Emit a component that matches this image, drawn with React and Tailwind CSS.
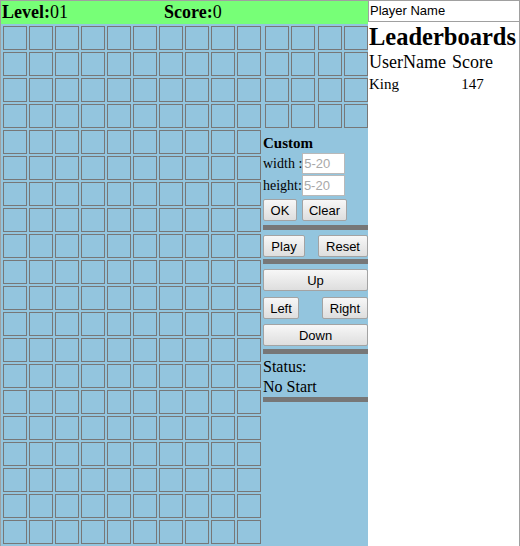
import React from 'react';

const cellCls = 'w-6 h-6 border border-[#777777]';

const Cells = ({ count }) =>
  Array.from({ length: count }).map((_, i) => <div key={i} className={cellCls} />);

const Btn = ({ className = '', children }) => (
  <button
    className={`h-[22px] border border-[#a3a3a3] rounded-[2px] bg-gradient-to-b from-[#f7f7f7] to-[#dedede] text-[13px] text-black leading-none font-['Liberation_Sans',Arial,sans-serif] ${className}`}
  >
    {children}
  </button>
);

const Sep = ({ className = '' }) => <div className={`h-[5px] bg-[#777777] ${className}`} />;

const SizeInput = () => (
  <input
    placeholder="5-20"
    className="w-[43px] h-[21px] border border-[#b9b9b9] bg-white pl-[1px] text-[13px] font-['Liberation_Sans',Arial,sans-serif] placeholder:text-[#a8a8a8] outline-none"
  />
);

export default function App() {
  return (
    <div className="w-[520px] h-[546px] flex bg-white border-l border-t border-r border-[#a0a0a0] font-['Liberation_Serif','Times_New_Roman',serif] text-black overflow-hidden">
      <div className="w-[367px] flex flex-col">
        <div className="h-[23px] bg-[#77ff77] flex text-[18px] leading-[23px] pl-[1px]">
          <div className="w-[162px]">
            <b>Level:</b>01
          </div>
          <div>
            <b>Score:</b>0
          </div>
        </div>
        <div className="flex flex-1 bg-[#93c5de]">
          <div className="grid grid-cols-10 gap-[2px] p-[2px] self-start">
            <Cells count={200} />
          </div>
          <div className="w-[105px] flex flex-col">
            <div className="grid grid-cols-4 gap-[2px] pt-[2px] pb-[2px] pl-[2px]">
              <Cells count={16} />
            </div>
            <div className="mt-[4px] text-[15px] leading-[18px] font-bold">Custom</div>
            <div className="mt-[1px] h-[21px] flex items-center text-[14px]">
              <span>width :</span>
              <SizeInput />
            </div>
            <div className="mt-[1px] h-[21px] flex items-center text-[14px]">
              <span>height:</span>
              <SizeInput />
            </div>
            <div className="mt-[3px] flex gap-[5px]">
              <Btn className="w-[34px] h-[21px]">OK</Btn>
              <Btn className="w-[45px] h-[21px]">Clear</Btn>
            </div>
            <Sep className="mt-[4px]" />
            <div className="mt-[5px] flex justify-between">
              <Btn className="w-[42px]">Play</Btn>
              <Btn className="w-[50px]">Reset</Btn>
            </div>
            <Sep className="mt-[2px]" />
            <Btn className="mt-[5px] w-full">Up</Btn>
            <div className="mt-[6px] flex justify-between">
              <Btn className="w-[36px]">Left</Btn>
              <Btn className="w-[46px]">Right</Btn>
            </div>
            <Btn className="mt-[5px] w-full">Down</Btn>
            <Sep className="mt-[3px]" />
            <div className="mt-[3px] text-[16px] leading-[20px]">
              <div>Status:</div>
              <div>No Start</div>
            </div>
            <Sep />
          </div>
        </div>
      </div>
      <div className="flex-1 flex flex-col">
        <div className="h-[21px] border-l border-b border-[#a0a0a0] pl-[1px] text-[13px] leading-[20px] font-['Liberation_Sans',Arial,sans-serif]">
          Player Name
        </div>
        <div className="pl-[1px]">
          <h2 className="mt-[1px] text-[24.5px] leading-[28px] font-bold">Leaderboards</h2>
          <div className="mt-[1px] grid grid-cols-[82px_43px] text-[18px] leading-[21px]">
            <span>UserName</span>
            <span className="text-center">Score</span>
          </div>
          <div className="mt-[3px] grid grid-cols-[82px_43px] text-[15px] leading-[17px]">
            <span>King</span>
            <span className="text-center">147</span>
          </div>
        </div>
      </div>
    </div>
  );
}
